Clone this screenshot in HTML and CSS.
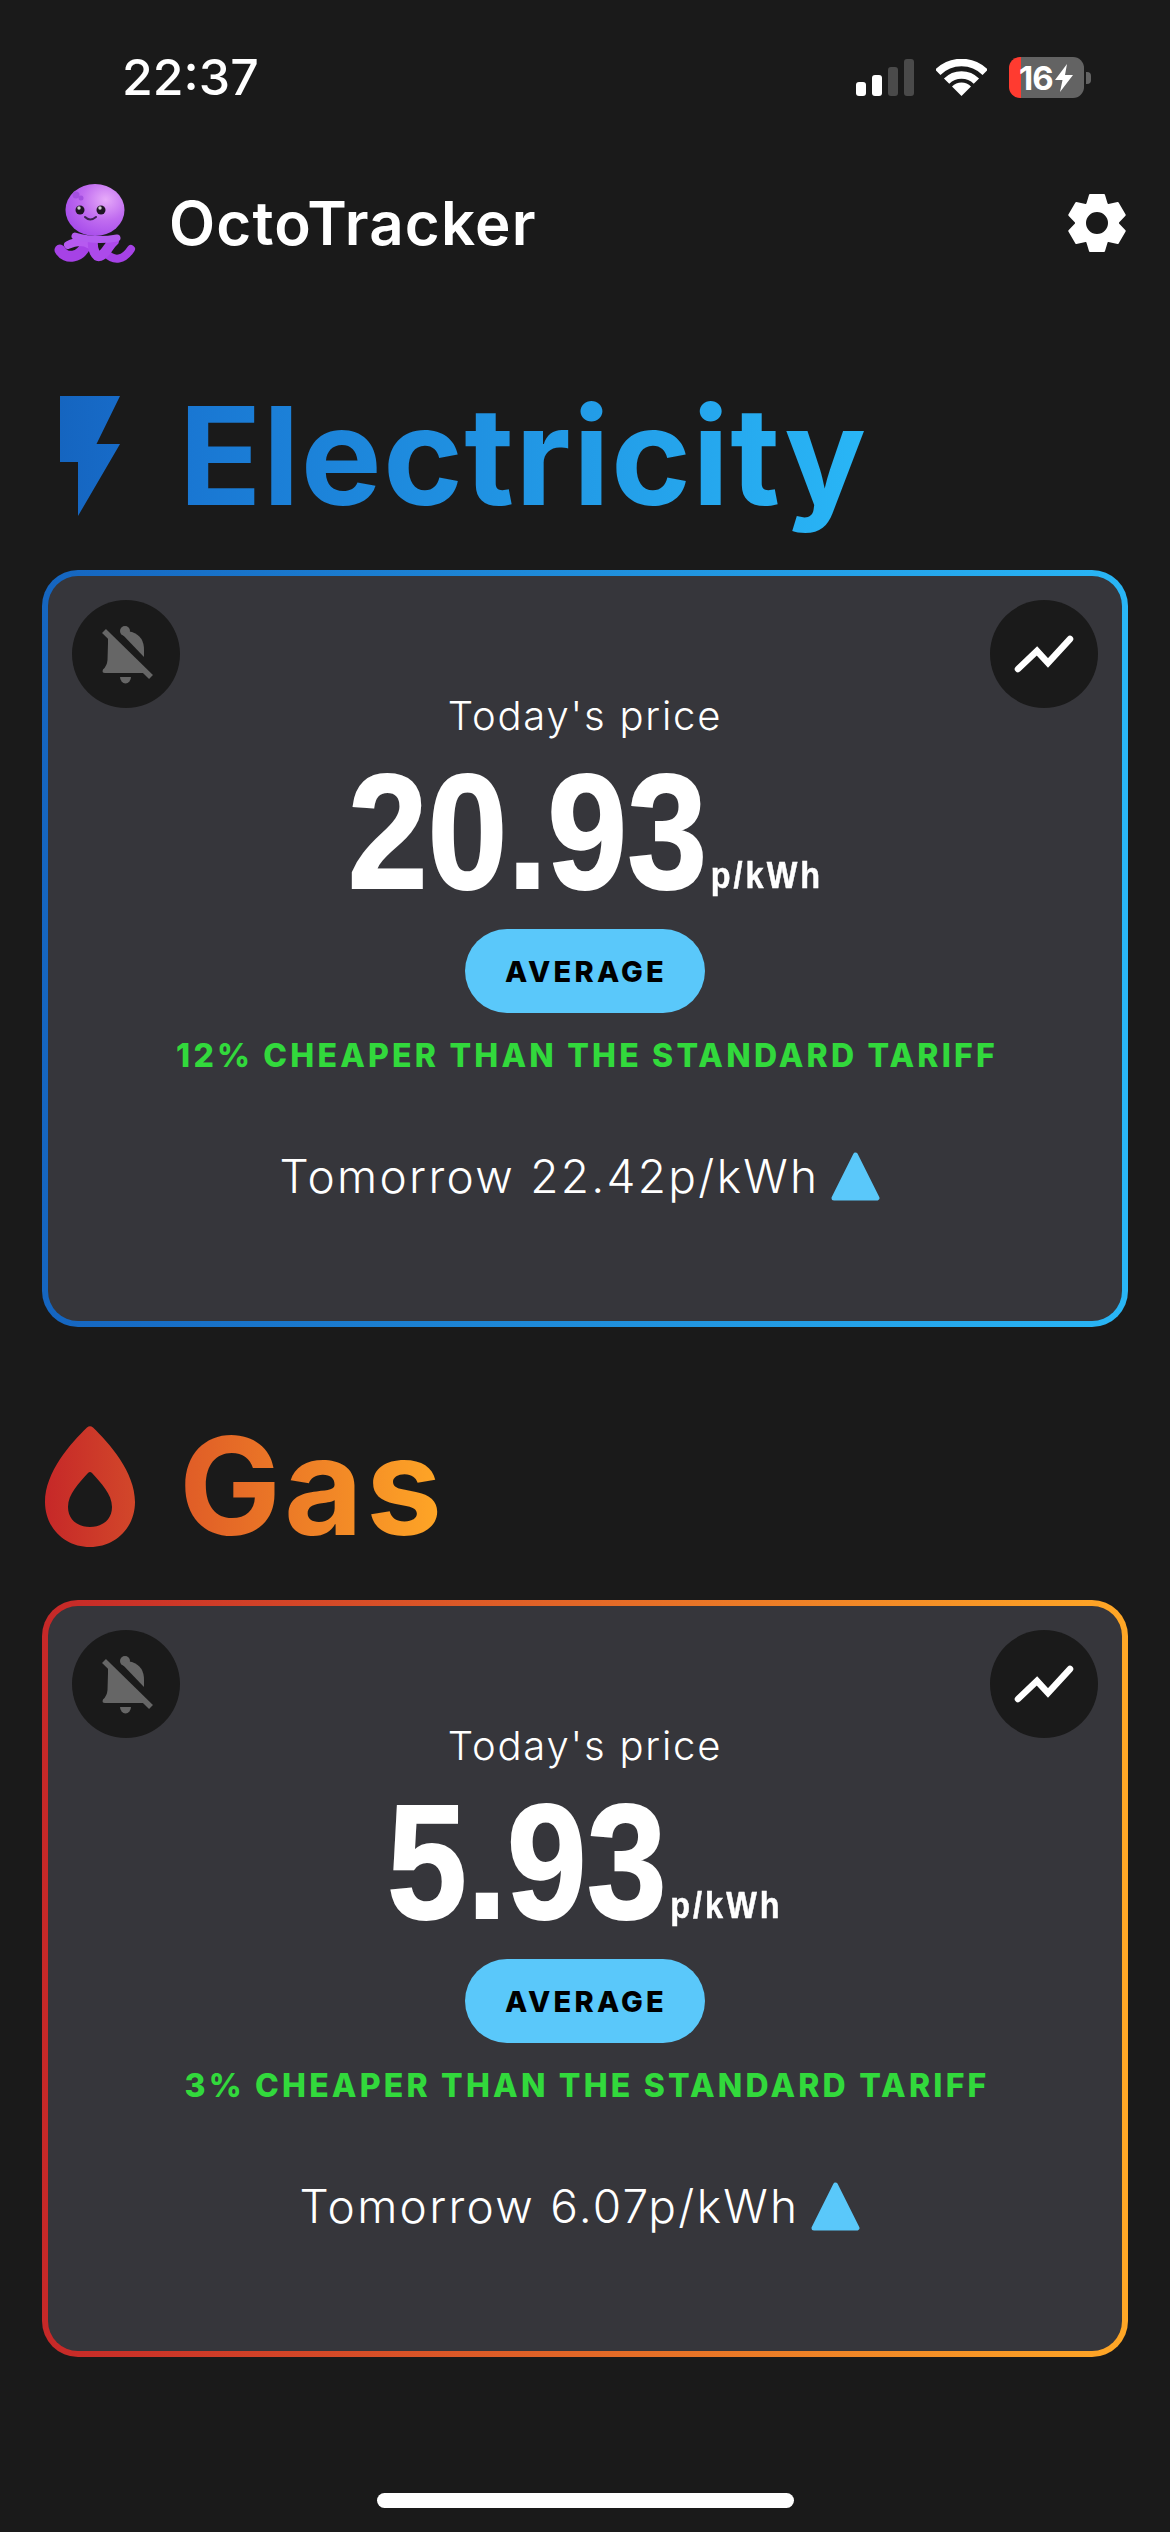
FILE: index.html
```html
<!DOCTYPE html>
<html lang="en">
<head>
  <meta charset="UTF-8">
  <title>OctoTracker</title>
  <link rel="stylesheet" href="styles.css">
</head>
<body>
  <div class="status">
    <span class="time">22:37</span>
    <div class="status-icons">
      <div class="signal">
        <i class="bar bar1"></i><i class="bar bar2"></i><i class="bar bar3 off"></i><i class="bar bar4 off"></i>
      </div>
      <svg class="wifi" viewBox="0 0 51 37">
        <path d="M1.8 13.3A33.5 33.5 0 0 1 49.2 13.3M10.6 22.2A21 21 0 0 1 40.4 22.2" fill="none" stroke="#fff" stroke-width="7.5"/>
        <path d="M25.5 37L16 27.5A13.4 13.4 0 0 1 35 27.5Z" fill="#fff"/>
      </svg>
      <div class="battery-wrap">
        <div class="battery">
          <span>16</span>
          <svg class="charge" viewBox="0 0 18 28"><path d="M12 0L0 16H7.5L5 28L18 11H10Z" fill="#fff"/></svg>
        </div>
        <i class="nub"></i>
      </div>
    </div>
  </div>

  <header class="top">
    <div class="brand">
      <svg class="octo" viewBox="54 183 84 80">
        <defs>
          <radialGradient id="octoHead" cx="0.68" cy="0.3" r="0.8">
            <stop offset="0" stop-color="#e6aaf9"/>
            <stop offset="0.5" stop-color="#c06cf0"/>
            <stop offset="1" stop-color="#a449ea"/>
          </radialGradient>
        </defs>
        <g fill="none" stroke-linecap="round">
          <path d="M60 250C66 260 80 258 86 245" stroke="#a642e6" stroke-width="11"/>
          <path d="M68 245C76 241 84 241 90 245" stroke="#b65af0" stroke-width="8"/>
          <path d="M106 253C114 262 124 260 131 249" stroke="#a642e6" stroke-width="8"/>
          <path d="M93 241C92 250 96 257 100 256C106 254 108 246 114 241" stroke="#ac4aea" stroke-width="10"/>
        </g>
        <ellipse cx="95" cy="210" rx="29.5" ry="26" fill="url(#octoHead)"/>
        <path d="M75 236Q95 242 117 238" fill="none" stroke="#b35cef" stroke-width="7" stroke-linecap="round"/>
        <circle cx="76" cy="195" r="3.5" fill="#a450e0"/>
        <circle cx="81" cy="198" r="2.5" fill="#a450e0"/>
        <circle cx="80" cy="210" r="4.5" fill="#1e1524"/>
        <circle cx="101" cy="210" r="4.5" fill="#1e1524"/>
        <circle cx="79" cy="208" r="1.7" fill="#ccc"/>
        <circle cx="100" cy="208" r="1.7" fill="#ccc"/>
        <path d="M85 217Q90 222 96 217" fill="none" stroke="#3d2152" stroke-width="2" stroke-linecap="round"/>
      </svg>
      <span class="app-name">OctoTracker</span>
    </div>
    <svg class="gear" viewBox="-29 -29 58 58">
      <circle r="16.5" fill="none" stroke="#fff" stroke-width="11"/>
      <g fill="#fff" stroke="#fff" stroke-width="2" stroke-linejoin="round">
        <path d="M-7 -28H7L10 -18H-10Z"/>
        <path d="M-7 -28H7L10 -18H-10Z" transform="rotate(60)"/>
        <path d="M-7 -28H7L10 -18H-10Z" transform="rotate(120)"/>
        <path d="M-7 -28H7L10 -18H-10Z" transform="rotate(180)"/>
        <path d="M-7 -28H7L10 -18H-10Z" transform="rotate(240)"/>
        <path d="M-7 -28H7L10 -18H-10Z" transform="rotate(300)"/>
      </g>
    </svg>
  </header>

  <section class="fuel">
    <div class="fuel-title">
      <div class="fuel-icon">
        <svg class="bolt" viewBox="60 396 60 120">
          <defs>
            <linearGradient id="boltFill" x1="0" x2="1" y1="0" y2="0">
              <stop offset="0" stop-color="#1565c0"/>
              <stop offset="1" stop-color="#176bc8"/>
            </linearGradient>
          </defs>
          <path d="M60 396H120L96.5 444H120L78 516V462H60Z" fill="url(#boltFill)"/>
        </svg>
      </div>
      <h1 class="fuel-name elec-text">Electricity</h1>
    </div>
    <div class="card elec-border">
      <div class="card-inner">
        <button class="round round-left">
          <svg viewBox="0 0 108 108">
            <path d="M36 37L73 73H33Q29.500 73 31 69.500Q35 66 35.500 60L36 43Z" fill="#666"/>
            <circle cx="53" cy="31" r="5" fill="#666"/>
            <path d="M49 33Q53 30 60 32Q72 36 72 50V57Z" fill="#666"/>
            <path d="M48 77H59A5.500 6.500 0 0 1 48 77Z" fill="#666"/>
            <path d="M32 31L79 77" stroke="#666" stroke-width="5.500"/>
          </svg>
        </button>
        <button class="round round-right">
          <svg viewBox="0 0 108 108">
            <path d="M28 49L47 31L58 43L80 19" transform="translate(0 20)" fill="none" stroke="#fff" stroke-width="6.500" stroke-linecap="round" stroke-linejoin="miter"/>
          </svg>
        </button>
        <div class="label">Today's price</div>
        <div class="price"><span class="amount">20.93</span><span class="unit">p/kWh</span></div>
        <div class="pill">AVERAGE</div>
        <div class="saving">12% CHEAPER THAN THE STANDARD TARIFF</div>
        <div class="tomorrow">
          <span>Tomorrow 22.42p/kWh</span>
          <svg class="tri" viewBox="0 0 49 49"><path d="M24.500 3L46 46H3Z" fill="#5ac8fa" stroke="#5ac8fa" stroke-width="5" stroke-linejoin="round"/></svg>
        </div>
      </div>
    </div>
  </section>

  <section class="fuel">
    <div class="fuel-title">
      <div class="fuel-icon">
        <svg class="flame" viewBox="0 0 90 121">
          <defs>
            <linearGradient id="flameFill" x1="0" x2="1" y1="0" y2="0">
              <stop offset="0" stop-color="#c62828"/>
              <stop offset="1" stop-color="#d2472a"/>
            </linearGradient>
          </defs>
          <path fill-rule="evenodd" d="M42 1.500Q45 -1 48 1.500C64 17 90 46 90 76C90 102 70 121 45 121C20 121 0 102 0 76C0 46 26 17 42 1.500ZM43 47C34 57 23 68 23 81C23 93 32 101 45 101C58 101 67 93 67 81C67 68 56 57 47 47Q45 45 43 47Z" fill="url(#flameFill)"/>
        </svg>
      </div>
      <h1 class="fuel-name gas-text">Gas</h1>
    </div>
    <div class="card gas-border">
      <div class="card-inner">
        <button class="round round-left">
          <svg viewBox="0 0 108 108">
            <path d="M36 37L73 73H33Q29.500 73 31 69.500Q35 66 35.500 60L36 43Z" fill="#666"/>
            <circle cx="53" cy="31" r="5" fill="#666"/>
            <path d="M49 33Q53 30 60 32Q72 36 72 50V57Z" fill="#666"/>
            <path d="M48 77H59A5.500 6.500 0 0 1 48 77Z" fill="#666"/>
            <path d="M32 31L79 77" stroke="#666" stroke-width="5.500"/>
          </svg>
        </button>
        <button class="round round-right">
          <svg viewBox="0 0 108 108">
            <path d="M28 49L47 31L58 43L80 19" transform="translate(0 20)" fill="none" stroke="#fff" stroke-width="6.500" stroke-linecap="round" stroke-linejoin="miter"/>
          </svg>
        </button>
        <div class="label">Today's price</div>
        <div class="price"><span class="amount">5.93</span><span class="unit">p/kWh</span></div>
        <div class="pill">AVERAGE</div>
        <div class="saving">3% CHEAPER THAN THE STANDARD TARIFF</div>
        <div class="tomorrow">
          <span>Tomorrow 6.07p/kWh</span>
          <svg class="tri" viewBox="0 0 49 49"><path d="M24.500 3L46 46H3Z" fill="#5ac8fa" stroke="#5ac8fa" stroke-width="5" stroke-linejoin="round"/></svg>
        </div>
      </div>
    </div>
  </section>

  <div class="home-bar"></div>
</body>
</html>
```

FILE: styles.css
```css
html, body { margin: 0; padding: 0; }
body { width: 1170px; height: 2532px; overflow: hidden; background: #1a1a1a; color: #fff; font-family: Inter, "Noto Sans", sans-serif; }

/* status bar */
.status { display: flex; justify-content: space-between; align-items: center; height: 41px; padding: 57px 79px 0 122px; }
.time { font-size: 50px; font-weight: 500; line-height: 41px; }
.status-icons { display: flex; align-items: center; gap: 22px; }
.signal { display: flex; align-items: flex-end; gap: 6px; height: 37px; }
.bar { display: block; width: 10px; background: #fff; border-radius: 3px; }
.bar1 { height: 14px; }
.bar2 { height: 21px; }
.bar3 { height: 29px; }
.bar4 { height: 37px; }
.bar.off { background: #4a4a4a; }
.wifi { display: block; width: 51px; height: 37px; }
.battery-wrap { display: flex; align-items: center; gap: 2px; }
.battery { display: flex; align-items: center; width: 75px; height: 41px; box-sizing: border-box; padding-left: 10px; border-radius: 11px; background: linear-gradient(90deg, #ff3b30 12px, #636363 12px); font-size: 33px; font-weight: 700; letter-spacing: -1px; }
.charge { width: 18px; height: 28px; margin-left: 2px; }
.nub { display: block; width: 5px; height: 12px; background: #636363; border-radius: 0 4px 4px 0; }

/* header */
.top { display: flex; justify-content: space-between; align-items: center; height: 80px; margin-top: 85px; padding: 0 44px 0 54px; }
.brand { display: flex; align-items: center; gap: 31px; }
.octo { display: block; width: 84px; height: 80px; }
.app-name { font-size: 60px; font-weight: 600; letter-spacing: 1.2px; }
.gear { display: block; width: 58px; height: 58px; }

/* fuel sections */
.fuel { margin-top: 133px; }
.fuel + .fuel { margin-top: 99px; }
.fuel-title { display: flex; align-items: center; height: 120px; margin-bottom: 54px; padding-left: 42px; }
.fuel-icon { display: flex; justify-content: center; width: 96px; margin-right: 41px; }
.bolt { display: block; width: 60px; height: 120px; }
.flame { display: block; width: 90px; height: 121px; }
.fuel-name { margin: 0 0 -40px; padding-bottom: 40px; font-size: 136px; font-weight: 700; line-height: 120px; -webkit-background-clip: text; background-clip: text; color: transparent; }
.elec-text { background-image: linear-gradient(90deg, #1976d2, #29b6f6); letter-spacing: 1.2px; }
.gas-text { background-image: linear-gradient(90deg, #df5b27, #ffa726); letter-spacing: 3px; }

/* card */
.card { height: 757px; box-sizing: border-box; margin: 0 42px; padding: 6px; border-radius: 36px; }
.elec-border { background: linear-gradient(90deg, #1565c0, #29b6f6); }
.gas-border { background: linear-gradient(90deg, #c62828, #ffa726); }
.card-inner { position: relative; display: flex; flex-direction: column; align-items: center; height: 100%; box-sizing: border-box; padding-top: 116px; border-radius: 30px; background: #36363b; }
.round { position: absolute; top: 24px; width: 108px; height: 108px; padding: 0; border: 0; border-radius: 50%; background: #1a1a1a; }
.round svg { display: block; width: 108px; height: 108px; }
.round-left { left: 24px; }
.round-right { right: 24px; }

.label { font-size: 40px; font-weight: 300; line-height: 48px; letter-spacing: 1.8px; }
/* no condensed face installed, so the bold is squeezed */
.price { display: flex; align-items: baseline; height: 150px; margin-top: 17px; font-family: "Liberation Sans", sans-serif; font-weight: 700; transform: scaleX(0.876); }
.amount { font-size: 164px; line-height: 150px; -webkit-text-stroke: 2px #fff; }
.unit { font-size: 37px; margin-left: 4px; letter-spacing: 3.5px; -webkit-text-stroke: 0.5px #fff; }
.pill { display: flex; justify-content: center; align-items: center; width: 240px; height: 84px; box-sizing: border-box; padding-left: 2px; margin-top: 22px; border-radius: 42px; background: #5ac8fa; color: #000; font-size: 29px; font-weight: 800; letter-spacing: 3.2px; }
.saving { margin: 25px 0 0 4px; font-size: 32px; font-weight: 800; line-height: 36px; letter-spacing: 3.2px; color: #32d93c; }
.tomorrow { display: flex; align-items: center; gap: 12px; margin: 74px 10px 0 0; font-size: 46px; font-weight: 300; letter-spacing: 2.3px; }
.tri { display: block; width: 49px; height: 49px; }

.home-bar { width: 417px; height: 15px; margin: 136px 0 0 377px; border-radius: 8px; background: #fff; }
```
